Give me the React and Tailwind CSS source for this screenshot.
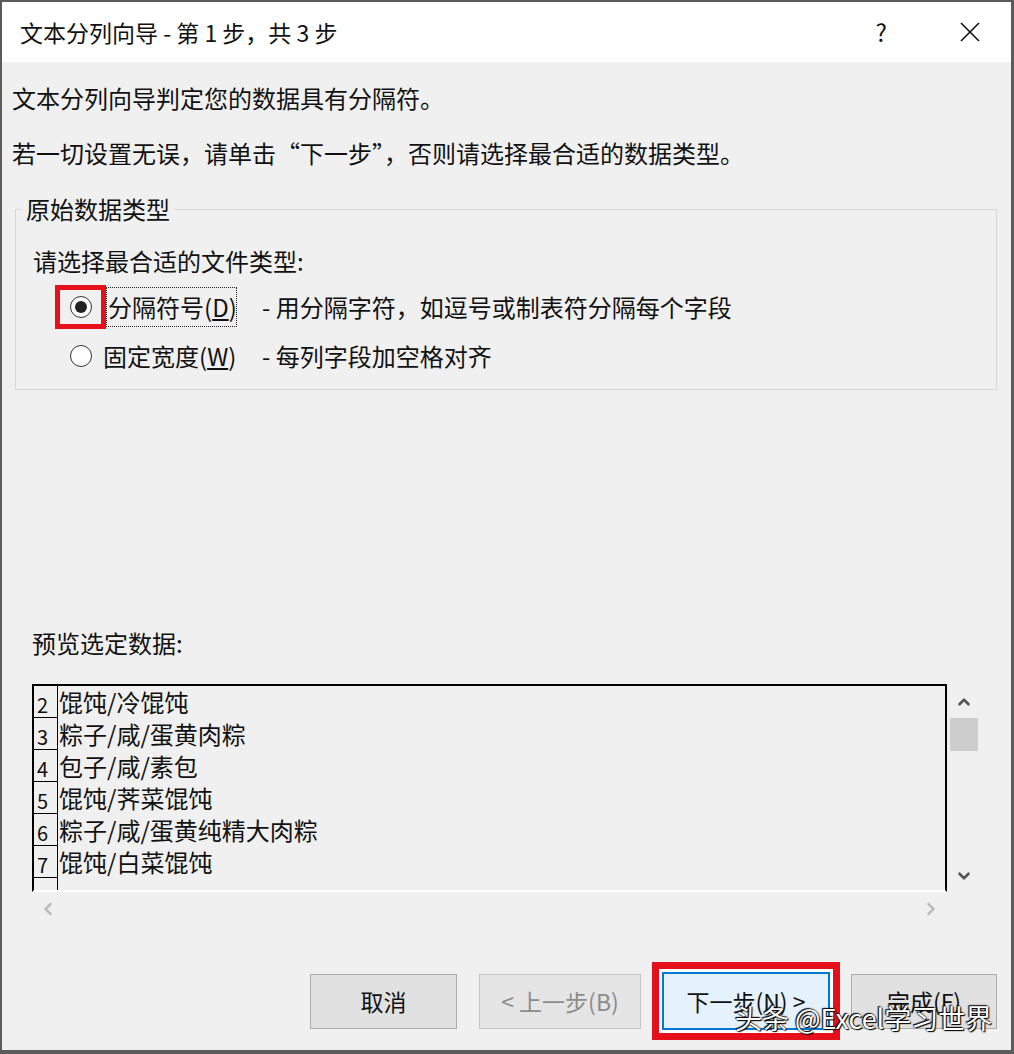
import { ChevronUp, ChevronDown, ChevronLeft, ChevronRight } from "lucide-react";

const rows = [
    { n: 2, text: "馄饨/冷馄饨" },
    { n: 3, text: "粽子/咸/蛋黄肉粽" },
    { n: 4, text: "包子/咸/素包" },
    { n: 5, text: "馄饨/荠菜馄饨" },
    { n: 6, text: "粽子/咸/蛋黄纯精大肉粽" },
    { n: 7, text: "馄饨/白菜馄饨" },
    { n: 8, text: "" },
];

const font = { fontFamily: '"Noto Sans CJK SC", "Noto Sans", sans-serif' };

const Radio = ({ checked }) => (
    <span className="flex items-center justify-center w-[22px] h-[22px] rounded-full border-[1.5px] border-[#333] bg-white">
        {checked && <span className="w-[12px] h-[12px] rounded-full bg-[#222]" />}
    </span>
);

const App = () => {
    return (
        <div
            className="w-[1014px] h-[1054px] bg-[#f0f0f0] border-t-2 border-l-2 border-r-[3px] border-b-4 border-[#5b5b5b] flex flex-col text-[#111] overflow-hidden relative"
            style={font}
        >
            {/* title bar */}
            <div className="h-[60px] bg-white flex items-center pl-[18px] pr-[30px] shrink-0">
                <span className="text-[23px] leading-none">文本分列向导 - 第 1 步，共 3 步</span>
                <span className="ml-auto text-[24px] leading-none mr-[72px]">?</span>
                <svg width="22" height="22" viewBox="0 0 22 22">
                    <path d="M2 2 L20 20 M20 2 L2 20" stroke="#111" strokeWidth="1.6" />
                </svg>
            </div>

            <div className="flex flex-col pl-[10px] pr-[14px]">
                <p className="mt-[20px] text-[24px] leading-[32px]">文本分列向导判定您的数据具有分隔符。</p>
                <p className="mt-[23px] text-[24px] leading-[32px]">
                    若一切设置无误，请单击“下一步”，否则请选择最合适的数据类型。
                </p>

                <fieldset className="mt-[24px] ml-[3px] border border-[#d6d6d6] pl-[6px] pb-[13px]">
                    <legend className="px-[4px] text-[24px] leading-[32px]">原始数据类型</legend>
                    <p className="mt-[20px] ml-[11px] text-[24px] leading-[32px]">请选择最合适的文件类型:</p>

                    <div className="mt-[10px] flex items-center h-[40px]">
                        <div className="ml-[33px] w-[51px] h-[44px] border-[5px] border-[#e5101c] flex items-center justify-center">
                            <Radio checked />
                        </div>
                        <div className="w-[131px] h-[40px] border border-dotted border-[#222] flex items-center pl-[1px]">
                            <span className="text-[24px] leading-none whitespace-nowrap">
                                分隔符号(<span className="underline underline-offset-2">D</span>)
                            </span>
                        </div>
                        <span className="ml-[25px] text-[24px] leading-none whitespace-nowrap">
                            - 用分隔字符，如逗号或制表符分隔每个字段
                        </span>
                    </div>

                    <div className="mt-[9px] flex items-center h-[40px]">
                        <div className="ml-[33px] w-[51px] flex items-center justify-center">
                            <Radio />
                        </div>
                        <div className="w-[131px] flex items-center -ml-[3px]">
                            <span className="text-[24px] leading-none whitespace-nowrap">
                                固定宽度(<span className="underline underline-offset-2">W</span>)
                            </span>
                        </div>
                        <span className="ml-[28px] text-[24px] leading-none whitespace-nowrap">- 每列字段加空格对齐</span>
                    </div>
                </fieldset>

                <p className="mt-[237px] ml-[20px] text-[24px] leading-[32px]">预览选定数据:</p>

                {/* preview */}
                <div className="mt-[25px] ml-[20px] flex">
                    <div className="w-[915px] h-[208px] border-2 border-black border-b-white overflow-hidden">
                        {rows.map((row) => (
                            <div key={row.n} className="flex h-[32px]">
                                <div className="w-[24px] shrink-0 border-r border-b border-black flex items-end pl-[3px] text-[20px] leading-[25px]">
                                    {row.text ? row.n : ""}
                                </div>
                                <div className="pl-[1px] text-[24px] leading-[32px] whitespace-nowrap">{row.text}</div>
                            </div>
                        ))}
                    </div>
                    <div className="w-[34px] h-[208px] flex flex-col items-center">
                        <ChevronUp className="mt-[9px] text-[#555]" size={18} strokeWidth={3.5} />
                        <div className="mt-[7px] w-[28px] h-[33px] bg-[#cdcdcd]" />
                        <ChevronDown className="mt-auto mb-[7px] text-[#555]" size={18} strokeWidth={3.5} />
                    </div>
                </div>

                <div className="ml-[20px] w-[915px] h-[33px] flex items-center justify-between px-[6px]">
                    <ChevronLeft className="text-[#bdbdbd]" size={20} strokeWidth={3} />
                    <ChevronRight className="text-[#bdbdbd]" size={20} strokeWidth={3} />
                </div>

                {/* buttons */}
                <div className="mt-[37px] flex items-center justify-end">
                    <button className="w-[147px] h-[55px] bg-[#e1e1e1] border border-[#adadad] text-[23px]">
                        取消
                    </button>
                    <button className="ml-[22px] w-[162px] h-[55px] bg-[#e5e5e5] border border-[#c6c6c6] text-[23px] text-[#8c8c8c]">
                        &lt; 上一步(B)
                    </button>
                    <div className="ml-[11px] border-[7px] border-[#e5101c] p-[3px] bg-white">
                        <button className="w-[168px] h-[58px] bg-[#e5f1fb] border-2 border-[#0078d7] text-[23px]">
                            下一步(N) &gt;
                        </button>
                    </div>
                    <button className="ml-[11px] w-[146px] h-[55px] bg-[#e1e1e1] border border-[#adadad] text-[23px]">
                        完成(F)
                    </button>
                </div>
            </div>

            {/* watermark */}
            <div className="absolute left-[733px] top-[998px] text-[27px] leading-[36px] text-white whitespace-nowrap [text-shadow:0_0_2px_#000,1px_1px_1px_#000,-1px_-1px_1px_#000]">
                头条 @Excel学习世界
            </div>
        </div>
    );
};

export default App;
